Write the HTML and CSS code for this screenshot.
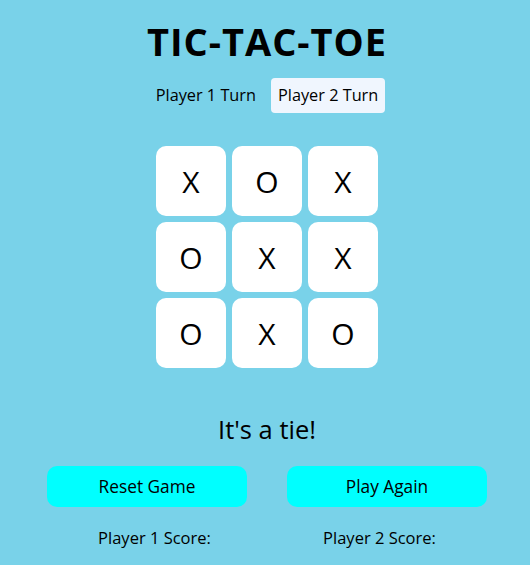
FILE: index.html
```html
<!DOCTYPE html>
<html>
<head>
<meta charset="utf-8">
<link rel="stylesheet" href="styles.css">
</head>
<body>
<div class="app">
  <h1 class="title">TIC-TAC-TOE</h1>
  <div class="turns">
    <div class="turn">Player 1 Turn</div>
    <div class="turn active">Player 2 Turn</div>
  </div>
  <div class="board">
    <div class="cell">X</div>
    <div class="cell">O</div>
    <div class="cell">X</div>
    <div class="cell">O</div>
    <div class="cell">X</div>
    <div class="cell">X</div>
    <div class="cell">O</div>
    <div class="cell">X</div>
    <div class="cell">O</div>
  </div>
  <div class="status">It's a tie!</div>
  <div class="buttons">
    <button class="btn">Reset Game</button>
    <button class="btn">Play Again</button>
  </div>
  <div class="scores">
    <div class="score">Player 1 Score:</div>
    <div class="score">Player 2 Score:</div>
  </div>
</div>
</body>
</html>
```
FILE: styles.css
```css
html, body {
  margin: 0;
  padding: 0;
  background: #79d2e9;
}
body {
  font-family: "Open Sans", "DejaVu Sans", sans-serif;
  color: #000;
  height: 565px;
  overflow: hidden;
}
.app {
  width: 530px;
  padding-left: 4px;
  box-sizing: border-box;
  display: flex;
  flex-direction: column;
  align-items: center;
}
.title {
  margin: 17px 0 0;
  font-size: 38px;
  line-height: 48px;
  font-weight: 700;
  letter-spacing: 1px;
}
.turns {
  margin-top: 13px;
  display: flex;
  gap: 8px;
}
.turn {
  font-size: 16.3px;
  line-height: 19px;
  padding: 8px 7px;
  border-radius: 4px;
}
.turn.active {
  background: #f0f6fe;
}
.board {
  margin-top: 33px;
  display: grid;
  grid-template-columns: repeat(3, 70px);
  grid-auto-rows: 70px;
  gap: 6px;
}
.cell {
  background: #fff;
  border-radius: 10px;
  display: flex;
  align-items: center;
  justify-content: center;
  font-size: 30px;
}
.status {
  margin-top: 46px;
  font-size: 25.5px;
  line-height: 30px;
}
.buttons {
  margin-top: 22px;
  display: flex;
  gap: 40px;
}
.btn {
  width: 200px;
  height: 41px;
  border: none;
  border-radius: 10px;
  background: #00ffff;
  font-family: inherit;
  font-size: 17.3px;
  color: #000;
  padding: 0;
}
.scores {
  margin-top: 20px;
  width: 450px;
  display: grid;
  grid-template-columns: 1fr 1fr;
  text-align: center;
}
.score {
  font-size: 16.5px;
  line-height: 22px;
}
```
